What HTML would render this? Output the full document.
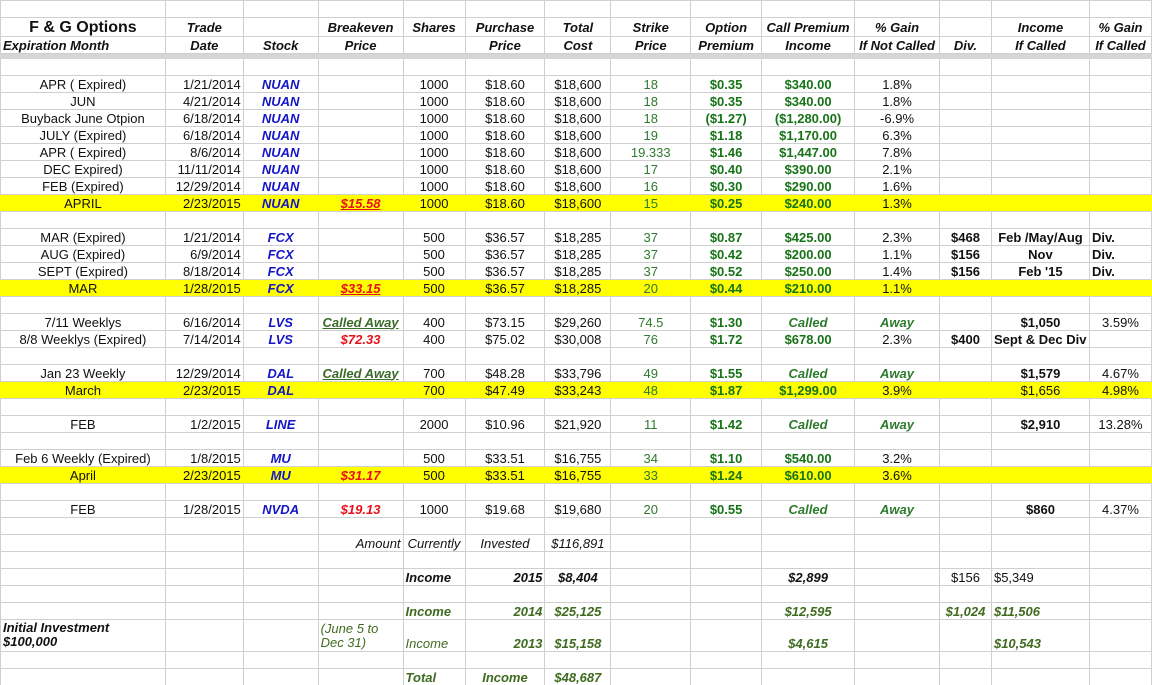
<!DOCTYPE html>
<html><head><meta charset="utf-8"><style>
html,body{margin:0;padding:0;background:#fff;width:1152px;height:685px;overflow:hidden}
table{border-collapse:collapse;table-layout:fixed;font-family:"Liberation Sans",Arial,sans-serif;font-size:13px;color:#111}
td{border:1px solid #cfcfcf;padding:0 2px;height:16px;line-height:15px;text-align:center;white-space:nowrap;overflow:hidden}
tr{height:17px}
.h td{font-weight:bold;font-style:italic;font-size:13px}
.band td{height:4px;background:#d6d6d6;border-color:#d6d6d6;padding:0}
.y td{background:#ffff00;border-left-color:#ffff00;border-right-color:#ffff00}
.r{text-align:right}.l{text-align:left}
.s{color:#1515c8;font-weight:bold;font-style:italic}
.k{color:#2d7a2d}
.p{color:#177317;font-weight:bold}
.be{color:#e8101a;font-weight:bold;font-style:italic}
.u{text-decoration:underline}
.ca{color:#3b6b2a;font-weight:bold;font-style:italic;text-decoration:underline}
.cg{color:#2d7a2d;font-weight:bold;font-style:italic}
.b{font-weight:bold}
.n{font-family:"Liberation Sans Narrow","Liberation Sans",sans-serif;font-style:italic;font-weight:bold}
.g{color:#3f6b1f}
</style></head><body>
<table>
<colgroup><col style="width:165px"><col style="width:78px"><col style="width:75px"><col style="width:85px"><col style="width:62px"><col style="width:80px"><col style="width:66px"><col style="width:80px"><col style="width:71px"><col style="width:93px"><col style="width:85px"><col style="width:52px"><col style="width:98px"><col style="width:62px"></colgroup>
<tr><td></td><td></td><td></td><td></td><td></td><td></td><td></td><td></td><td></td><td></td><td></td><td></td><td></td><td></td></tr>
<tr class="h" style="height:19px"><td style="font-style:normal;font-size:16px">F &amp; G Options</td><td>Trade</td><td></td><td>Breakeven</td><td>Shares</td><td>Purchase</td><td>Total</td><td>Strike</td><td>Option</td><td>Call Premium</td><td>% Gain</td><td></td><td>Income</td><td>% Gain</td></tr>
<tr class="h"><td class="l">Expiration Month</td><td>Date</td><td>Stock</td><td>Price</td><td></td><td>Price</td><td>Cost</td><td>Price</td><td>Premium</td><td>Income</td><td>If Not Called</td><td>Div.</td><td>If Called</td><td>If Called</td></tr>
<tr class="band" style="height:5px"><td></td><td></td><td></td><td></td><td></td><td></td><td></td><td></td><td></td><td></td><td></td><td></td><td></td><td></td></tr>
<tr><td></td><td></td><td></td><td></td><td></td><td></td><td></td><td></td><td></td><td></td><td></td><td></td><td></td><td></td></tr>
<tr><td>APR ( Expired)</td><td class="r">1/21/2014</td><td class="s">NUAN</td><td></td><td>1000</td><td>$18.60</td><td>$18,600</td><td class="k">18</td><td class="p">$0.35</td><td class="p">$340.00</td><td>1.8%</td><td></td><td></td><td></td></tr>
<tr><td>JUN</td><td class="r">4/21/2014</td><td class="s">NUAN</td><td></td><td>1000</td><td>$18.60</td><td>$18,600</td><td class="k">18</td><td class="p">$0.35</td><td class="p">$340.00</td><td>1.8%</td><td></td><td></td><td></td></tr>
<tr><td>Buyback June Otpion</td><td class="r">6/18/2014</td><td class="s">NUAN</td><td></td><td>1000</td><td>$18.60</td><td>$18,600</td><td class="k">18</td><td class="p">($1.27)</td><td class="p">($1,280.00)</td><td>-6.9%</td><td></td><td></td><td></td></tr>
<tr><td>JULY (Expired)</td><td class="r">6/18/2014</td><td class="s">NUAN</td><td></td><td>1000</td><td>$18.60</td><td>$18,600</td><td class="k">19</td><td class="p">$1.18</td><td class="p">$1,170.00</td><td>6.3%</td><td></td><td></td><td></td></tr>
<tr><td>APR ( Expired)</td><td class="r">8/6/2014</td><td class="s">NUAN</td><td></td><td>1000</td><td>$18.60</td><td>$18,600</td><td class="k">19.333</td><td class="p">$1.46</td><td class="p">$1,447.00</td><td>7.8%</td><td></td><td></td><td></td></tr>
<tr><td>DEC Expired)</td><td class="r">11/11/2014</td><td class="s">NUAN</td><td></td><td>1000</td><td>$18.60</td><td>$18,600</td><td class="k">17</td><td class="p">$0.40</td><td class="p">$390.00</td><td>2.1%</td><td></td><td></td><td></td></tr>
<tr><td>FEB (Expired)</td><td class="r">12/29/2014</td><td class="s">NUAN</td><td></td><td>1000</td><td>$18.60</td><td>$18,600</td><td class="k">16</td><td class="p">$0.30</td><td class="p">$290.00</td><td>1.6%</td><td></td><td></td><td></td></tr>
<tr class="y"><td>APRIL</td><td class="r">2/23/2015</td><td class="s">NUAN</td><td class="be u">$15.58</td><td>1000</td><td>$18.60</td><td>$18,600</td><td class="k">15</td><td class="p">$0.25</td><td class="p">$240.00</td><td>1.3%</td><td></td><td></td><td></td></tr>
<tr><td></td><td></td><td></td><td></td><td></td><td></td><td></td><td></td><td></td><td></td><td></td><td></td><td></td><td></td></tr>
<tr><td>MAR (Expired)</td><td class="r">1/21/2014</td><td class="s">FCX</td><td></td><td>500</td><td>$36.57</td><td>$18,285</td><td class="k">37</td><td class="p">$0.87</td><td class="p">$425.00</td><td>2.3%</td><td class="b">$468</td><td class="b">Feb /May/Aug</td><td class="b l">Div.</td></tr>
<tr><td>AUG (Expired)</td><td class="r">6/9/2014</td><td class="s">FCX</td><td></td><td>500</td><td>$36.57</td><td>$18,285</td><td class="k">37</td><td class="p">$0.42</td><td class="p">$200.00</td><td>1.1%</td><td class="b">$156</td><td class="b">Nov</td><td class="b l">Div.</td></tr>
<tr><td>SEPT (Expired)</td><td class="r">8/18/2014</td><td class="s">FCX</td><td></td><td>500</td><td>$36.57</td><td>$18,285</td><td class="k">37</td><td class="p">$0.52</td><td class="p">$250.00</td><td>1.4%</td><td class="b">$156</td><td class="b">Feb '15</td><td class="b l">Div.</td></tr>
<tr class="y"><td>MAR</td><td class="r">1/28/2015</td><td class="s">FCX</td><td class="be u">$33.15</td><td>500</td><td>$36.57</td><td>$18,285</td><td class="k">20</td><td class="p">$0.44</td><td class="p">$210.00</td><td>1.1%</td><td></td><td></td><td></td></tr>
<tr><td></td><td></td><td></td><td></td><td></td><td></td><td></td><td></td><td></td><td></td><td></td><td></td><td></td><td></td></tr>
<tr><td>7/11 Weeklys</td><td class="r">6/16/2014</td><td class="s">LVS</td><td class="ca">Called Away</td><td>400</td><td>$73.15</td><td>$29,260</td><td class="k">74.5</td><td class="p">$1.30</td><td class="cg">Called</td><td class="cg">Away</td><td></td><td class="b">$1,050</td><td>3.59%</td></tr>
<tr><td>8/8 Weeklys (Expired)</td><td class="r">7/14/2014</td><td class="s">LVS</td><td class="be">$72.33</td><td>400</td><td>$75.02</td><td>$30,008</td><td class="k">76</td><td class="p">$1.72</td><td class="p">$678.00</td><td>2.3%</td><td class="b">$400</td><td class="b" style="overflow:visible;text-align:left">Sept &amp; Dec Div</td><td></td></tr>
<tr><td></td><td></td><td></td><td></td><td></td><td></td><td></td><td></td><td></td><td></td><td></td><td></td><td></td><td></td></tr>
<tr><td>Jan 23 Weekly</td><td class="r">12/29/2014</td><td class="s">DAL</td><td class="ca">Called Away</td><td>700</td><td>$48.28</td><td>$33,796</td><td class="k">49</td><td class="p">$1.55</td><td class="cg">Called</td><td class="cg">Away</td><td></td><td class="b">$1,579</td><td>4.67%</td></tr>
<tr class="y"><td>March</td><td class="r">2/23/2015</td><td class="s">DAL</td><td></td><td>700</td><td>$47.49</td><td>$33,243</td><td class="k">48</td><td class="p">$1.87</td><td class="p">$1,299.00</td><td>3.9%</td><td></td><td>$1,656</td><td>4.98%</td></tr>
<tr><td></td><td></td><td></td><td></td><td></td><td></td><td></td><td></td><td></td><td></td><td></td><td></td><td></td><td></td></tr>
<tr><td>FEB</td><td class="r">1/2/2015</td><td class="s">LINE</td><td></td><td>2000</td><td>$10.96</td><td>$21,920</td><td class="k">11</td><td class="p">$1.42</td><td class="cg">Called</td><td class="cg">Away</td><td></td><td class="b">$2,910</td><td>13.28%</td></tr>
<tr><td></td><td></td><td></td><td></td><td></td><td></td><td></td><td></td><td></td><td></td><td></td><td></td><td></td><td></td></tr>
<tr><td>Feb 6 Weekly (Expired)</td><td class="r">1/8/2015</td><td class="s">MU</td><td></td><td>500</td><td>$33.51</td><td>$16,755</td><td class="k">34</td><td class="p">$1.10</td><td class="p">$540.00</td><td>3.2%</td><td></td><td></td><td></td></tr>
<tr class="y"><td>April</td><td class="r">2/23/2015</td><td class="s">MU</td><td class="be">$31.17</td><td>500</td><td>$33.51</td><td>$16,755</td><td class="k">33</td><td class="p">$1.24</td><td class="p">$610.00</td><td>3.6%</td><td></td><td></td><td></td></tr>
<tr><td></td><td></td><td></td><td></td><td></td><td></td><td></td><td></td><td></td><td></td><td></td><td></td><td></td><td></td></tr>
<tr><td>FEB</td><td class="r">1/28/2015</td><td class="s">NVDA</td><td class="be">$19.13</td><td>1000</td><td>$19.68</td><td>$19,680</td><td class="k">20</td><td class="p">$0.55</td><td class="cg">Called</td><td class="cg">Away</td><td></td><td class="b">$860</td><td>4.37%</td></tr>
<tr><td></td><td></td><td></td><td></td><td></td><td></td><td></td><td></td><td></td><td></td><td></td><td></td><td></td><td></td></tr>
<tr><td></td><td></td><td></td><td class="n r" style="font-weight:normal">Amount</td><td class="n" style="font-weight:normal">Currently</td><td class="n" style="font-weight:normal">Invested</td><td class="n" style="font-weight:normal">$116,891</td><td></td><td></td><td></td><td></td><td></td><td></td><td></td></tr>
<tr><td></td><td></td><td></td><td></td><td></td><td></td><td></td><td></td><td></td><td></td><td></td><td></td><td></td><td></td></tr>
<tr><td></td><td></td><td></td><td></td><td class="n l">Income</td><td class="n r">2015</td><td class="n">$8,404</td><td></td><td></td><td class="n">$2,899</td><td></td><td class="n" style="font-weight:normal;font-style:normal">$156</td><td class="n l" style="font-weight:normal;font-style:normal">$5,349</td><td></td></tr>
<tr><td></td><td></td><td></td><td></td><td></td><td></td><td></td><td></td><td></td><td></td><td></td><td></td><td></td><td></td></tr>
<tr class="g"><td></td><td></td><td></td><td></td><td class="n l">Income</td><td class="n r">2014</td><td class="n">$25,125</td><td></td><td></td><td class="n">$12,595</td><td></td><td class="n">$1,024</td><td class="n l">$11,506</td><td></td></tr>
<tr style="height:32px"><td class="n l" style="font-weight:bold;line-height:14px;vertical-align:bottom;padding-bottom:2px;color:#111">Initial Investment<br>$100,000</td><td></td><td></td><td class="n l g" style="font-weight:normal;line-height:14px">(June 5 to<br>Dec 31)</td><td class="n l g" style="font-weight:normal;vertical-align:bottom">Income</td><td class="n r g" style="vertical-align:bottom">2013</td><td class="n g" style="vertical-align:bottom">$15,158</td><td></td><td></td><td class="n g" style="vertical-align:bottom">$4,615</td><td></td><td></td><td class="n l g" style="vertical-align:bottom">$10,543</td><td></td></tr>
<tr><td></td><td></td><td></td><td></td><td></td><td></td><td></td><td></td><td></td><td></td><td></td><td></td><td></td><td></td></tr>
<tr class="g"><td></td><td></td><td></td><td></td><td class="n l">Total</td><td class="n">Income</td><td class="n">$48,687</td><td></td><td></td><td></td><td></td><td></td><td></td><td></td></tr>
</table>
</body></html>
